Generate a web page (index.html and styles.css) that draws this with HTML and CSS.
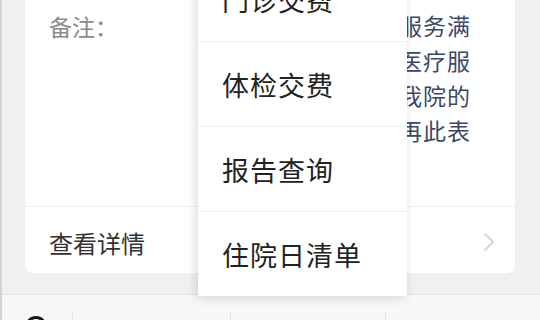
FILE: index.html
```html
<!DOCTYPE html>
<html lang="zh-CN">
<head>
<meta charset="utf-8">
<title>备注</title>
<link rel="stylesheet" href="styles.css">
</head>
<body>
<div class="screen">
  <main class="content">
    <section class="card">
      <div class="note-row">
        <div class="label">备注：</div>
        <div class="note">
          <div class="line">服务满</div>
          <div class="line">医疗服</div>
          <div class="line">我院的</div>
          <div class="line">再此表</div>
        </div>
      </div>
      <div class="detail-row">
        <span class="detail-text">查看详情</span>
        <svg class="chevron" width="12" height="20" viewBox="0 0 12 20"><polyline points="2,2 10,10 2,18" fill="none" stroke="#d4d4d4" stroke-width="1.8" stroke-linecap="round" stroke-linejoin="round"/></svg>
      </div>
    </section>
  </main>
  <nav class="bottom-bar">
    <div class="cell cell-icon"><span class="ring"></span></div>
    <div class="cell cell-a"></div>
    <div class="cell cell-b"></div>
    <div class="cell cell-c"></div>
  </nav>
  <ul class="menu">
    <li class="menu-item">门诊交费</li>
    <li class="menu-item">体检交费</li>
    <li class="menu-item">报告查询</li>
    <li class="menu-item">住院日清单</li>
  </ul>
</div>
</body>
</html>
```
FILE: styles.css
```css
html, body {
  margin: 0;
  padding: 0;
}
body {
  width: 540px;
  height: 320px;
  overflow: hidden;
  font-family: "Noto Sans CJK SC", "Noto Sans", sans-serif;
  background: #efefef;
}
.screen {
  position: relative;
  width: 540px;
  height: 320px;
  box-sizing: border-box;
  border-left: 2px solid #d2d2d2;
  background: #f0f0f0;
  overflow: hidden;
  display: flex;
  flex-direction: column;
}
.content {
  flex: none;
  padding: 0 25px 0 23px;
  height: 294px;
  box-sizing: border-box;
}
.card {
  background: #ffffff;
  border-radius: 0 0 8px 8px;
  height: 273px;
  display: flex;
  flex-direction: column;
}
.note-row {
  height: 207px;
  box-sizing: border-box;
  padding: 8px 45px 0 24px;
  display: flex;
  justify-content: space-between;
  border-bottom: 1px solid #f0f0f0;
}
.label {
  font-size: 23px;
  line-height: 37px;
  color: #8a8a8a;
  flex: none;
}
.note {
  flex: none;
  width: 74px;
  overflow: hidden;
}
.line {
  font-size: 23px;
  line-height: 35px;
  color: #3c4966;
  text-align: right;
  white-space: nowrap;
  letter-spacing: 1px;
  margin-right: -1px;
}
.detail-row {
  flex: 1;
  display: flex;
  align-items: center;
  justify-content: space-between;
  padding: 4px 20px 0 24px;
}
.detail-text {
  font-size: 24px;
  color: #333333;
}
.chevron {
  display: block;
}
.bottom-bar {
  flex: 1;
  min-height: 0;
  overflow: hidden;
  border-top: 1px solid #e3e3e3;
  background: #f7f7f7;
  display: flex;
  align-items: flex-start;
}
.cell {
  flex: none;
  margin-top: 18px;
  height: 30px;
  border-left: 1px solid #e2e2e2;
}
.cell-icon {
  border-left: none;
  width: 70px;
  box-sizing: border-box;
  padding: 3px 0 0 23px;
}
.ring {
  display: block;
  width: 22px;
  height: 22px;
  box-sizing: border-box;
  border: 3px solid #151515;
  border-radius: 50%;
}
.cell-a { width: 157px; }
.cell-b { width: 154px; }
.cell-c { flex: 1; }
.menu {
  position: absolute;
  left: 196px;
  top: -43px;
  width: 209px;
  margin: 0;
  padding: 0;
  list-style: none;
  background: #ffffff;
  box-shadow: -2px 2px 10px rgba(0, 0, 0, 0.14);
}
.menu-item {
  height: 84px;
  border-bottom: 1px solid #efefef;
  display: flex;
  align-items: center;
  padding-left: 24px;
  font-size: 27px;
  letter-spacing: 1px;
  color: #222222;
}
.menu-item:last-child {
  border-bottom: none;
}
```
